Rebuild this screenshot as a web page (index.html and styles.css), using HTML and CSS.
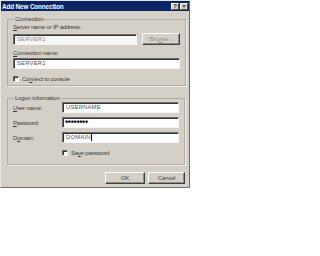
FILE: index.html
```html
<!DOCTYPE html>
<html>
<head>
<meta charset="utf-8">
<link rel="stylesheet" href="styles.css">
</head>
<body>
<div class="dialog">
  <div class="titlebar">
    <span class="title">Add New Connection</span>
    <div class="tbtns"><span class="tbtn">?</span><span class="tbtn">×</span></div>
  </div>
  <div class="content">
    <fieldset class="group conn">
      <legend>Connection</legend>
      <div class="lbl first"><u>S</u>erver name or IP address:</div>
      <div class="row">
        <div class="input wide dim">SERVER1</div>
        <div class="btn dis">Bro<u>w</u>se...</div>
      </div>
      <div class="lbl second"><u>C</u>onnection name:</div>
      <div class="input">SERVER1</div>
      <div class="check"><span class="box"></span><span>Co<u>n</u>nect to console</span></div>
    </fieldset>
    <fieldset class="group logon">
      <legend>Logon information</legend>
      <div class="form">
        <div class="flbl"><u>U</u>ser name:</div>
        <div class="input">USERNAME</div>
        <div class="flbl"><u>P</u>assword:</div>
        <div class="input pw">••••••••</div>
        <div class="flbl">D<u>o</u>main:</div>
        <div class="input">DOMAIN<span class="caret"></span></div>
        <div></div>
        <div class="check save"><span class="box"></span><span>Sa<u>v</u>e password</span></div>
      </div>
    </fieldset>
    <div class="buttons">
      <div class="btn ok">OK</div>
      <div class="btn cancel">Cancel</div>
    </div>
  </div>
</div>
</body>
</html>
```

FILE: styles.css
```css
html, body {
  margin: 0;
  padding: 0;
  background: #ffffff;
}
body {
  font-family: "Liberation Sans", Arial, sans-serif;
  font-size: 6px;
  letter-spacing: -0.2px;
  color: #3a3a3a;
}
.dialog {
  width: 190px;
  height: 188px;
  box-sizing: border-box;
  background: #d4d0c8;
  border: 1px solid;
  border-color: #e8e6e0 #6a6a6a #6a6a6a #e8e6e0;
  display: flex;
  flex-direction: column;
}
.titlebar {
  height: 10px;
  background: #0b2466;
  display: flex;
  align-items: center;
  justify-content: space-between;
  padding: 0 1px 0 1px;
}
.title {
  color: #ffffff;
  font-weight: bold;
  font-size: 6.3px;
  letter-spacing: -0.1px;
}
.tbtns {
  display: flex;
  gap: 1px;
}
.tbtn {
  width: 8px;
  height: 7px;
  box-sizing: border-box;
  background: #d4d0c8;
  border: 1px solid;
  border-color: #ffffff #505050 #505050 #ffffff;
  font-size: 6px;
  font-weight: bold;
  line-height: 5px;
  text-align: center;
  letter-spacing: 0;
  color: #222;
}
.content {
  padding: 5px 4px 0 6px;
  display: flex;
  flex-direction: column;
}
.group {
  margin: 0;
  padding: 0 5px 0 5px;
  border: 1px solid #b0aca4;
  box-shadow: 1px 1px 0 #f0eee8;
  width: 178px;
  box-sizing: border-box;
}
.group legend {
  padding: 0 1px;
  margin-left: 1px;
  line-height: 6px;
}
.conn {
  height: 70px;
}
.logon {
  margin-top: 9px;
  height: 70px;
}
.lbl {
  line-height: 6px;
}
.lbl.first {
  margin-top: 2px;
}
.lbl.second {
  margin-top: 5px;
  margin-bottom: 2px;
}
.row {
  display: flex;
  align-items: center;
  gap: 5px;
  margin-top: 3px;
}
.input {
  height: 11px;
  box-sizing: border-box;
  background: #ffffff;
  border: 1px solid;
  border-color: #6e6e6e #f4f4f4 #f4f4f4 #6e6e6e;
  box-shadow: inset 1px 1px 0 #333;
  padding: 0 3px;
  line-height: 9px;
  color: #555;
  letter-spacing: 0.1px;
}
.input.wide {
  width: 124px;
}
.input.dim {
  background: #f6f6f4;
  color: #8a8a8a;
}
.input.pw {
  color: #111;
  font-size: 9px;
  font-weight: bold;
  letter-spacing: -0.3px;
  padding-left: 2px;
}
.caret {
  display: inline-block;
  width: 1px;
  height: 7px;
  background: #111;
  vertical-align: middle;
}
.btn {
  width: 38px;
  height: 12px;
  box-sizing: border-box;
  background: #d4d0c8;
  border: 1px solid;
  border-color: #ffffff #404040 #404040 #ffffff;
  box-shadow: inset -1px -1px 0 #8c8c8c;
  text-align: center;
  line-height: 10px;
  color: #444;
}
.btn.dis {
  color: #909090;
}
.check {
  display: flex;
  align-items: center;
  gap: 3px;
  margin-top: 7px;
}
.box {
  width: 6px;
  height: 6px;
  box-sizing: border-box;
  background: #ffffff;
  border: 1px solid;
  border-color: #6e6e6e #f0f0f0 #f0f0f0 #6e6e6e;
  box-shadow: inset 1px 1px 0 #333;
}
.form {
  display: grid;
  grid-template-columns: 49px 117px;
  row-gap: 4px;
  align-items: center;
  margin-top: 1px;
}
.flbl {
  line-height: 6px;
}
.check.save {
  margin-top: 3px;
}
.buttons {
  display: flex;
  justify-content: flex-end;
  gap: 3px;
  margin-top: 7px;
}
.btn.ok {
  width: 40px;
}
.btn.cancel {
  width: 37px;
}
```
